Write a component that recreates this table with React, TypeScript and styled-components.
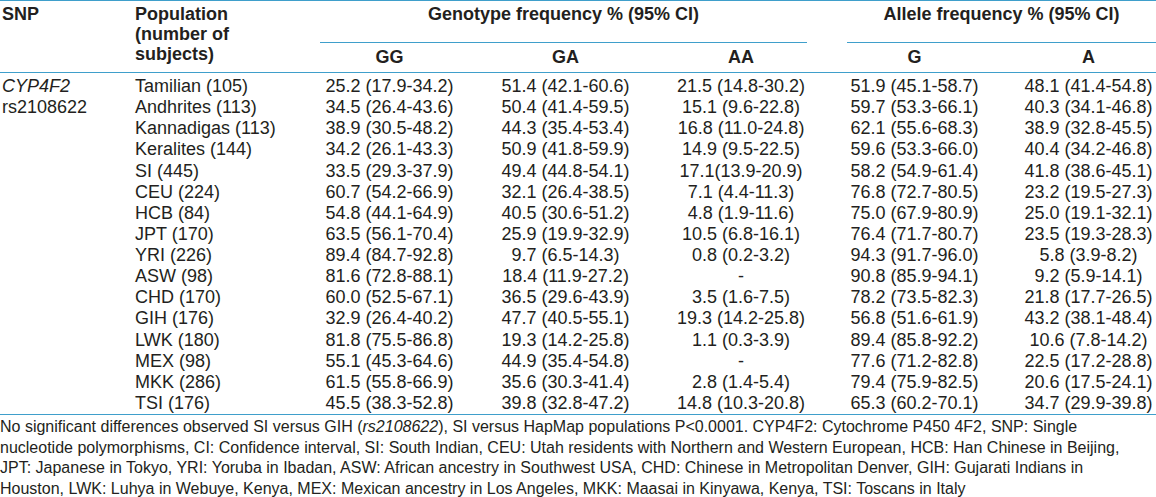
import React from "react";
import styled, { createGlobalStyle } from "styled-components";

const RULE = "#3f9fcb";
const INK = "#231f20";
const COLS = "133px 169px 175px 177px 174px 173px 155px";

const GlobalStyle = createGlobalStyle`
  body {
    margin: 0;
    background: #fff;
    color: ${INK};
    font-family: "Liberation Sans", Arial, Helvetica, sans-serif;
  }
`;

const Page = styled.div`
  width: 1156px;
  height: 497px;
  overflow: hidden;
`;

const Head = styled.div`
  display: grid;
  grid-template-columns: ${COLS};
  grid-template-rows: auto auto;
  border-top: 1px solid ${RULE};
  border-bottom: 1px solid ${RULE};
  padding: 3px 0 5px;
  font-size: 18px;
  line-height: 20px;
  font-weight: bold;
`;

const StubHead = styled.div<{ $col: number }>`
  grid-column: ${(p) => p.$col};
  grid-row: 1 / span 2;
  padding-left: 2px;
`;

const GroupHead = styled.div<{ $col: number; $span: number; $left: number; $right: number }>`
  grid-column: ${(p) => p.$col} / span ${(p) => p.$span};
  grid-row: 1;
  margin: 0 ${(p) => p.$right}px 0 ${(p) => p.$left}px;
  padding-bottom: 18px;
  border-bottom: 1px solid ${RULE};
  text-align: center;
  white-space: nowrap;
`;

const SubHead = styled.div<{ $col: number }>`
  grid-column: ${(p) => p.$col};
  grid-row: 2;
  padding-top: 4px;
  text-align: center;
  &:last-child {
    padding-left: 20px;
  }
`;

const Body = styled.div`
  padding-top: 3px;
  border-bottom: 1px solid ${RULE};
`;

const Row = styled.div`
  display: grid;
  grid-template-columns: ${COLS};
  font-size: 18px;
  line-height: 21.13px;
`;

const Stub = styled.div<{ $italic?: boolean }>`
  padding-left: 2px;
  white-space: nowrap;
  font-style: ${(p) => (p.$italic ? "italic" : "normal")};
`;

const Value = styled.div`
  text-align: center;
  white-space: nowrap;
  &:last-child {
    padding-left: 20px;
  }
`;

const Note = styled.p`
  margin: 0;
  padding: 2px 10px 0 0;
  font-size: 16px;
  line-height: 20.7px;
`;

const rows: [string, string[]][] = [
  ["Tamilian (105)", ["25.2 (17.9-34.2)", "51.4 (42.1-60.6)", "21.5 (14.8-30.2)", "51.9 (45.1-58.7)", "48.1 (41.4-54.8)"]],
  ["Andhrites (113)", ["34.5 (26.4-43.6)", "50.4 (41.4-59.5)", "15.1 (9.6-22.8)", "59.7 (53.3-66.1)", "40.3 (34.1-46.8)"]],
  ["Kannadigas (113)", ["38.9 (30.5-48.2)", "44.3 (35.4-53.4)", "16.8 (11.0-24.8)", "62.1 (55.6-68.3)", "38.9 (32.8-45.5)"]],
  ["Keralites (144)", ["34.2 (26.1-43.3)", "50.9 (41.8-59.9)", "14.9 (9.5-22.5)", "59.6 (53.3-66.0)", "40.4 (34.2-46.8)"]],
  ["SI (445)", ["33.5 (29.3-37.9)", "49.4 (44.8-54.1)", "17.1(13.9-20.9)", "58.2 (54.9-61.4)", "41.8 (38.6-45.1)"]],
  ["CEU (224)", ["60.7 (54.2-66.9)", "32.1 (26.4-38.5)", "7.1 (4.4-11.3)", "76.8 (72.7-80.5)", "23.2 (19.5-27.3)"]],
  ["HCB (84)", ["54.8 (44.1-64.9)", "40.5 (30.6-51.2)", "4.8 (1.9-11.6)", "75.0 (67.9-80.9)", "25.0 (19.1-32.1)"]],
  ["JPT (170)", ["63.5 (56.1-70.4)", "25.9 (19.9-32.9)", "10.5 (6.8-16.1)", "76.4 (71.7-80.7)", "23.5 (19.3-28.3)"]],
  ["YRI (226)", ["89.4 (84.7-92.8)", "9.7 (6.5-14.3)", "0.8 (0.2-3.2)", "94.3 (91.7-96.0)", "5.8 (3.9-8.2)"]],
  ["ASW (98)", ["81.6 (72.8-88.1)", "18.4 (11.9-27.2)", "-", "90.8 (85.9-94.1)", "9.2 (5.9-14.1)"]],
  ["CHD (170)", ["60.0 (52.5-67.1)", "36.5 (29.6-43.9)", "3.5 (1.6-7.5)", "78.2 (73.5-82.3)", "21.8 (17.7-26.5)"]],
  ["GIH (176)", ["32.9 (26.4-40.2)", "47.7 (40.5-55.1)", "19.3 (14.2-25.8)", "56.8 (51.6-61.9)", "43.2 (38.1-48.4)"]],
  ["LWK (180)", ["81.8 (75.5-86.8)", "19.3 (14.2-25.8)", "1.1 (0.3-3.9)", "89.4 (85.8-92.2)", "10.6 (7.8-14.2)"]],
  ["MEX (98)", ["55.1 (45.3-64.6)", "44.9 (35.4-54.8)", "-", "77.6 (71.2-82.8)", "22.5 (17.2-28.8)"]],
  ["MKK (286)", ["61.5 (55.8-66.9)", "35.6 (30.3-41.4)", "2.8 (1.4-5.4)", "79.4 (75.9-82.5)", "20.6 (17.5-24.1)"]],
  ["TSI (176)", ["45.5 (38.3-52.8)", "39.8 (32.8-47.2)", "14.8 (10.3-20.8)", "65.3 (60.2-70.1)", "34.7 (29.9-39.8)"]],
];

const snp = ["CYP4F2", "rs2108622"];
const subHeads = ["GG", "GA", "AA", "G", "A"];

export default function App() {
  return (
    <Page>
      <GlobalStyle />
      <Head>
        <StubHead $col={1}>SNP</StubHead>
        <StubHead $col={2}>
          Population
          <br />
          (number of
          <br />
          subjects)
        </StubHead>
        <GroupHead $col={3} $span={3} $left={18} $right={21}>
          Genotype frequency % (95% CI)
        </GroupHead>
        <GroupHead $col={6} $span={2} $left={19} $right={0}>
          Allele frequency % (95% CI)
        </GroupHead>
        {subHeads.map((h, i) => (
          <SubHead key={h} $col={i + 3}>
            {h}
          </SubHead>
        ))}
      </Head>
      <Body>
        {rows.map(([pop, vals], i) => (
          <Row key={pop}>
            <Stub $italic={i === 0}>{snp[i] ?? ""}</Stub>
            <Stub>{pop}</Stub>
            {vals.map((v, j) => (
              <Value key={j}>{v}</Value>
            ))}
          </Row>
        ))}
      </Body>
      <Note>
        No significant differences observed SI versus GIH (<i>rs2108622</i>), SI versus HapMap populations P&lt;0.0001.
        CYP4F2: Cytochrome P450 4F2, SNP: Single nucleotide polymorphisms, CI: Confidence interval, SI: South Indian,
        CEU: Utah residents with Northern and Western European, HCB: Han Chinese in Beijing, JPT: Japanese in Tokyo,
        YRI: Yoruba in Ibadan, ASW: African ancestry in Southwest USA, CHD: Chinese in Metropolitan Denver, GIH: Gujarati
        Indians in Houston, LWK: Luhya in Webuye, Kenya, MEX: Mexican ancestry in Los Angeles, MKK: Maasai in Kinyawa,
        Kenya, TSI: Toscans in Italy
      </Note>
    </Page>
  );
}
